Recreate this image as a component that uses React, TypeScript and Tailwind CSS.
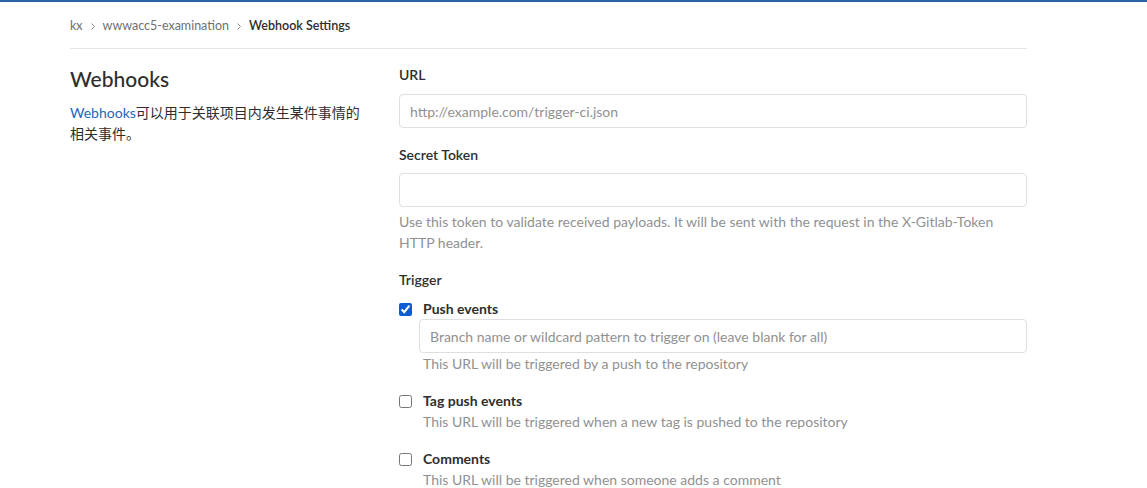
import React from "react";

function Chevron() {
  return (
    <svg width="4" height="7" viewBox="0 0 4 7" className="mx-[8px]" fill="none">
      <path d="M0.5 0.5 L3.5 3.5 L0.5 6.5" stroke="#8c8c8c" strokeWidth="1" />
    </svg>
  );
}

export default function App() {
  return (
    <div className="min-h-[488px] bg-white text-[#2e2e2e] font-['Lato','Noto_Sans_CJK_SC',sans-serif]">
      <div className="h-[2px] bg-[#2a63a8]" />
      <div className="w-[957px] ml-[70px]">
        <div className="h-[47px] pt-[2px] flex items-center text-[12.5px] border-b border-[#e5e5e5]">
          <span className="text-[#707070]">kx</span>
          <Chevron />
          <span className="text-[#707070]">wwwacc5-examination</span>
          <Chevron />
          <span className="font-semibold text-[#2e2e2e]">Webhook Settings</span>
        </div>
        <div className="flex pt-[15px]">
          <div className="w-[300px] mr-[29px]">
            <h4 className="text-[21px] font-medium leading-[28px] mt-[1px]">Webhooks</h4>
            <p className="text-[14px] leading-[21px] mt-[9px]">
              <a className="text-[#1b69b6]">Webhooks</a>可以用于关联项目内发生某件事情的相关事件。
            </p>
          </div>
          <div className="flex-1 text-[14px]">
            <label className="block font-semibold leading-[20px] mt-[1px]">URL</label>
            <div className="mt-[9px] h-[34px] border border-[#dfdfdf] rounded-[4px] px-[10px] flex items-center text-[#919191]">
              http://example.com/trigger-ci.json
            </div>
            <label className="block font-semibold leading-[20px] mt-[17px]">Secret Token</label>
            <div className="mt-[8px] h-[34px] border border-[#dfdfdf] rounded-[4px]" />
            <p className="text-[#919191] leading-[21px] mt-[4px]">
              Use this token to validate received payloads. It will be sent with the request in the X-Gitlab-Token HTTP header.
            </p>
            <label className="block font-semibold leading-[20px] mt-[17px]">Trigger</label>
            <div className="mt-[9px]">
              <div className="flex items-center leading-[20px]">
                <input type="checkbox" defaultChecked className="w-[13px] h-[13px] m-0 accent-[#0b5cd5]" />
                <span className="ml-[11px] font-bold">Push events</span>
              </div>
              <div className="ml-[20px] mt-[0px] h-[34px] border border-[#dfdfdf] rounded-[4px] px-[10px] flex items-center text-[#919191]">
                Branch name or wildcard pattern to trigger on (leave blank for all)
              </div>
              <p className="ml-[24px] text-[#919191] leading-[21px] mt-[0px]">This URL will be triggered by a push to the repository</p>
            </div>
            <div className="mt-[17px]">
              <div className="flex items-center leading-[20px]">
                <input type="checkbox" className="w-[13px] h-[13px] m-0" />
                <span className="ml-[11px] font-bold">Tag push events</span>
              </div>
              <p className="ml-[24px] text-[#919191] leading-[21px]">This URL will be triggered when a new tag is pushed to the repository</p>
            </div>
            <div className="mt-[17px]">
              <div className="flex items-center leading-[20px]">
                <input type="checkbox" className="w-[13px] h-[13px] m-0" />
                <span className="ml-[11px] font-bold">Comments</span>
              </div>
              <p className="ml-[24px] text-[#919191] leading-[21px]">This URL will be triggered when someone adds a comment</p>
            </div>
          </div>
        </div>
      </div>
    </div>
  );
}
